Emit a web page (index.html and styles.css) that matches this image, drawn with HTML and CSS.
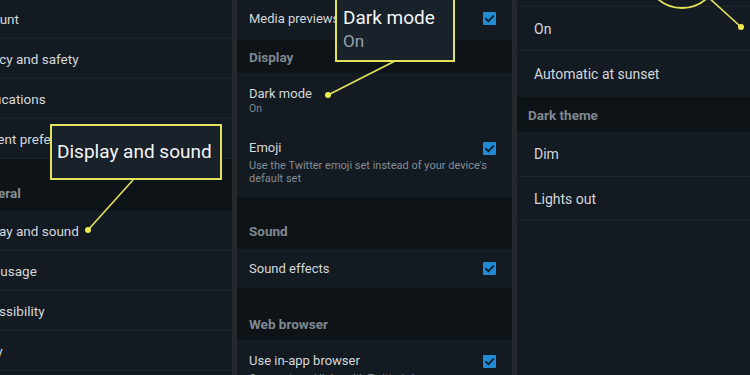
FILE: index.html
```html
<!DOCTYPE html>
<html>
<head>
<meta charset="utf-8">
<link rel="stylesheet" href="styles.css">
</head>
<body>
<div class="screen">
  <div class="panel left">
    <div class="list">
      <div class="row">Account</div>
      <div class="row">Privacy and safety</div>
      <div class="row">Notifications</div>
      <div class="row">Content preferences</div>
      <div class="head head-tall">General</div>
      <div class="row">Display and sound</div>
      <div class="row">Data usage</div>
      <div class="row">Accessibility</div>
      <div class="row">Proxy</div>
    </div>
  </div>
  <div class="divider"></div>
  <div class="panel middle">
    <div class="mrow first"><span>Media previews</span><span class="check"><svg viewBox="0 0 13 13"><path d="M3 6.8 L5.4 9.2 L10.2 4.2"/></svg></span></div>
    <div class="mhead short">Display</div>
    <div class="mitem dark">
      <div class="mtitle">Dark mode</div>
      <div class="msub">On</div>
    </div>
    <div class="mitem emoji">
      <div class="mtop"><span class="mtitle">Emoji</span><span class="check"><svg viewBox="0 0 13 13"><path d="M3 6.8 L5.4 9.2 L10.2 4.2"/></svg></span></div>
      <div class="mdesc">Use the Twitter emoji set instead of your device's default set</div>
    </div>
    <div class="mhead tall">Sound</div>
    <div class="mrow sound"><span>Sound effects</span><span class="check"><svg viewBox="0 0 13 13"><path d="M3 6.8 L5.4 9.2 L10.2 4.2"/></svg></span></div>
    <div class="mhead tall web">Web browser</div>
    <div class="mitem inapp">
      <div class="mtop"><span class="mtitle">Use in-app browser</span><span class="check"><svg viewBox="0 0 13 13"><path d="M3 6.8 L5.4 9.2 L10.2 4.2"/></svg></span></div>
      <div class="mdesc">Open external links with Twitter's browser</div>
    </div>
  </div>
  <div class="divider"></div>
  <div class="panel right">
    <div class="rspacer"></div>
    <div class="rrow line">On</div>
    <div class="rrow auto">Automatic at sunset</div>
    <div class="rhead">Dark theme</div>
    <div class="rrow line dim">Dim</div>
    <div class="rrow line">Lights out</div>
  </div>

  <div class="callout call-left">Display and sound</div>
  <div class="callout call-mid">
    <div class="ct">Dark mode</div>
    <div class="cs">On</div>
  </div>
  <svg class="overlay" viewBox="0 0 750 375" width="750" height="375">
    <line x1="133" y1="180" x2="88" y2="230"/>
    <circle class="dot" cx="88" cy="230" r="3"/>
    <line x1="395" y1="61" x2="328" y2="95"/>
    <circle class="dot" cx="328" cy="95" r="3"/>
    <circle class="ring" cx="682" cy="-29" r="37"/>
    <line x1="708" y1="-3" x2="741" y2="27"/>
    <circle class="dot" cx="741" cy="27" r="3"/>
  </svg>
</div>
</body>
</html>
```

FILE: styles.css
```css
* { box-sizing: border-box; }
html, body { margin: 0; padding: 0; }
body {
  width: 750px;
  height: 375px;
  overflow: hidden;
  background: #131a21;
  font-family: Roboto, "Noto Sans", "Liberation Sans", sans-serif;
  color: #d6dadf;
}
.screen {
  position: relative;
  display: flex;
  width: 750px;
  height: 375px;
  overflow: hidden;
}
.panel {
  height: 375px;
  overflow: hidden;
  background: #131a21;
}
.divider {
  width: 5px;
  height: 375px;
  background: #24282c;
}
.left { width: 232px; }
.middle { width: 275px; }
.right { width: 233px; }

/* left list */
.left .list {
  margin-top: -1px;
  margin-left: -31px;
  width: 263px;
}
.row {
  height: 40px;
  display: flex;
  align-items: center;
  font-size: 13.5px;
  color: #d4d8dc;
  border-bottom: 1px solid #1b232b;
  white-space: nowrap;
}
.head {
  background: #0e1318;
  font-weight: 700;
  font-size: 13.5px;
  color: #858e97;
  white-space: nowrap;
}
.head-tall {
  height: 52px;
  padding-top: 26px;
  padding-left: 5px;
  line-height: 16px;
}

/* middle */
.mrow {
  display: flex;
  justify-content: space-between;
  align-items: center;
  padding: 0 16px 0 12px;
  font-size: 13px;
  color: #d4d8dc;
}
.mrow.first { height: 40px; padding-bottom: 4px; }
.mrow.sound { height: 39px; }
.mhead {
  background: #0e1318;
  font-weight: 700;
  font-size: 13.5px;
  color: #7f8891;
  padding-left: 12px;
  line-height: 16px;
}
.mhead.short { height: 33px; display: flex; align-items: center; }
.mhead.tall { height: 52px; padding-top: 26px; }
.mhead.web { padding-top: 28px; }
.mitem {
  padding: 13px 16px 11px 12px;
}
.mitem.emoji { padding-bottom: 12px; }
.mtop {
  display: flex;
  justify-content: space-between;
  align-items: center;
}
.mtitle {
  font-size: 13px;
  line-height: 16px;
  color: #d4d8dc;
}
.msub {
  font-size: 10.5px;
  line-height: 14px;
  color: #7f8891;
}
.mdesc {
  margin-top: 3px;
  font-size: 11px;
  line-height: 13px;
  color: #848d96;
  padding-right: 4px;
}
.check {
  width: 13px;
  height: 13px;
  border-radius: 1px;
  background: #238bd3;
  display: inline-flex;
}
.check svg { width: 13px; height: 13px; }
.check path {
  fill: none;
  stroke: #10202f;
  stroke-width: 1.8;
  stroke-linecap: square;
}

/* right */
.rspacer {
  height: 7px;
  border-bottom: 1px solid #1b232b;
}
.rrow {
  display: flex;
  align-items: center;
  padding-left: 17px;
  font-size: 14px;
  color: #d4d8dc;
  height: 44px;
}
.rrow.line { border-bottom: 1px solid #1b232b; }
.rrow.auto { height: 46px; }
.rrow.dim { height: 45px; }
.rhead {
  height: 35px;
  display: flex;
  align-items: center;
  padding-left: 11px;
  background: #0e1318;
  font-weight: 700;
  font-size: 13.5px;
  color: #7f8891;
}

/* callouts */
.callout {
  position: absolute;
  border: 2px solid #e2e35a;
  background: #19212a;
  color: #f4f5f6;
}
.call-left {
  left: 50px;
  top: 124px;
  width: 172px;
  height: 56px;
  display: flex;
  align-items: center;
  padding-left: 5px;
  padding-bottom: 2px;
  font-size: 19px;
  white-space: nowrap;
}
.call-mid {
  left: 335px;
  top: -2px;
  width: 120px;
  height: 64px;
  padding: 6px 0 0 6px;
}
.call-mid .ct {
  font-size: 19px;
  line-height: 24px;
  white-space: nowrap;
}
.call-mid .cs {
  font-size: 17px;
  line-height: 22px;
  color: #98a1a9;
}
.overlay {
  position: absolute;
  left: 0;
  top: 0;
  pointer-events: none;
}
.overlay line {
  stroke: #e2e35a;
  stroke-width: 1.6;
}
.overlay .ring {
  fill: none;
  stroke: #e2e35a;
  stroke-width: 1.8;
}
.overlay .dot { fill: #ecee4e; }
```
